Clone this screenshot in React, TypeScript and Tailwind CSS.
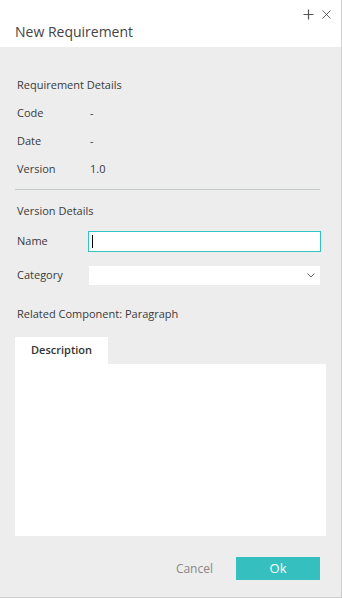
import React from 'react';

const rows = [
    { label: 'Code', value: '-' },
    { label: 'Date', value: '-' },
    { label: 'Version', value: '1.0' },
];

const App: React.FC = () => {
    return (
        <div
            className="w-[342px] h-[598px] bg-[#ededed] border-r border-b border-[#cfcfcf] flex flex-col text-[#3a3a3a]"
            style={{ fontFamily: '"Open Sans", "Liberation Sans", sans-serif' }}
        >
            {/* Header */}
            <div className="h-[47px] bg-white relative shrink-0">
                <div className="absolute right-[10px] top-[9px] flex items-center gap-[8px] text-[#555]">
                    <svg width="11" height="11" viewBox="0 0 11 11" fill="none" stroke="currentColor" strokeWidth="1.2">
                        <path d="M5.5 0.5v10M0.5 5.5h10" />
                    </svg>
                    <svg width="9" height="9" viewBox="0 0 9 9" fill="none" stroke="currentColor" strokeWidth="0.9">
                        <path d="M0.5 0.5l8 8M8.5 0.5l-8 8" />
                    </svg>
                </div>
                <h1 className="pl-[15px] pt-[22px] text-[14px] leading-[20px] text-[#444]">New Requirement</h1>
            </div>

            {/* Body */}
            <div className="flex flex-col px-[15px] pt-[24px] text-[11px]">
                <div className="h-[28px] flex items-center pl-[2px]">Requirement Details</div>
                {rows.map(r => (
                    <div key={r.label} className="h-[28px] flex items-center pl-[2px]">
                        <span className="w-[73px]">{r.label}</span>
                        <span>{r.value}</span>
                    </div>
                ))}
                <div className="mt-[6px] h-px bg-[#c6cbce] w-[305px]" />

                <div className="mt-[7px] h-[28px] flex items-center pl-[2px]">Version Details</div>
                <div className="mt-[6px] flex items-center pl-[2px]">
                    <span className="w-[71px]">Name</span>
                    <div className="w-[233px] h-[21px] bg-white border border-[#33c3c3] flex items-center pl-[3px]">
                        <div className="w-px h-[13px] bg-black" />
                    </div>
                </div>
                <div className="mt-[14px] flex items-center pl-[2px]">
                    <span className="w-[72px]">Category</span>
                    <div className="w-[231px] h-[19px] bg-white flex items-center justify-end pr-[5px]">
                        <svg width="8" height="5" viewBox="0 0 8 5" fill="none" stroke="#666" strokeWidth="1">
                            <path d="M0.5 0.5l3.5 3.5 3.5-3.5" />
                        </svg>
                    </div>
                </div>
                <div className="mt-[15px] h-[28px] flex items-center pl-[2px]">Related Component: Paragraph</div>

                {/* Tabs */}
                <div className="mt-[9px] flex">
                    <div className="w-[93px] h-[27px] bg-white flex items-center justify-center font-semibold text-[#333]">Description</div>
                </div>
                <div className="h-[172px] w-[311px] bg-white" />

                {/* Footer */}
                <div className="mt-[21px] flex items-center justify-end pr-[6px]">
                    <button className="text-[12px] text-[#888] mr-[23px]">Cancel</button>
                    <button className="w-[84px] h-[23px] bg-[#35bfbf] text-white text-[13px]">Ok</button>
                </div>
            </div>
        </div>
    );
};

export default App;
